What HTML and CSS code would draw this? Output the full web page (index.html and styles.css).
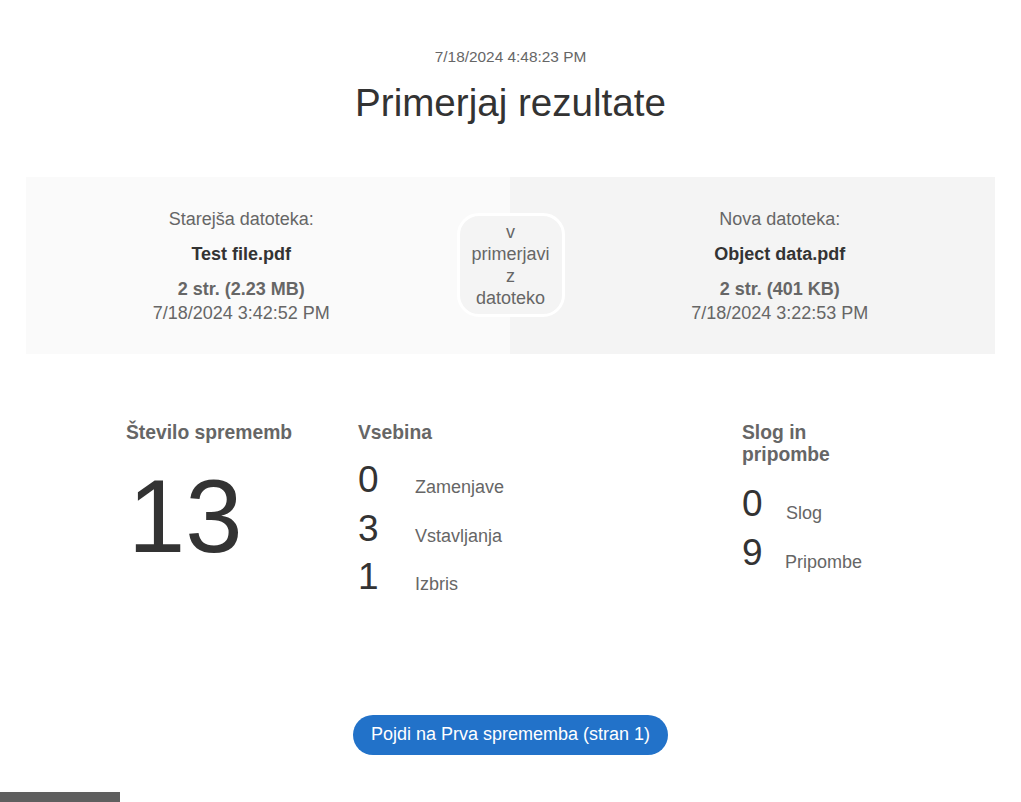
FILE: index.html
```html
<!DOCTYPE html>
<html lang="sl">
<head>
<meta charset="utf-8">
<title>Primerjaj rezultate</title>
<link rel="stylesheet" href="styles.css">
</head>
<body>
<div class="page">
  <header class="head">
    <div class="stamp">7/18/2024 4:48:23 PM</div>
    <h1 class="title">Primerjaj rezultate</h1>
  </header>

  <section class="files">
    <div class="file">
      <div class="file-label">Starejša datoteka:</div>
      <div class="file-name">Test file.pdf</div>
      <div class="file-size">2 str. (2.23 MB)</div>
      <div class="file-date">7/18/2024 3:42:52 PM</div>
    </div>
    <div class="versus">v<br>primerjavi<br>z<br>datoteko</div>
    <div class="file">
      <div class="file-label">Nova datoteka:</div>
      <div class="file-name">Object data.pdf</div>
      <div class="file-size">2 str. (401 KB)</div>
      <div class="file-date">7/18/2024 3:22:53 PM</div>
    </div>
  </section>

  <section class="stats">
    <div class="col col-total">
      <h2 class="col-title">Število sprememb</h2>
      <div class="total">13</div>
    </div>
    <div class="col col-content">
      <h2 class="col-title">Vsebina</h2>
      <div class="rows">
        <div class="row"><span class="num">0</span><span class="lbl">Zamenjave</span></div>
        <div class="row"><span class="num">3</span><span class="lbl">Vstavljanja</span></div>
        <div class="row"><span class="num">1</span><span class="lbl">Izbris</span></div>
      </div>
    </div>
    <div class="col col-style">
      <h2 class="col-title">Slog in pripombe</h2>
      <div class="rows">
        <div class="row"><span class="num">0</span><span class="lbl">Slog</span></div>
        <div class="row"><span class="num">9</span><span class="lbl">Pripombe</span></div>
      </div>
    </div>
  </section>

  <div class="actions">
    <button class="go" type="button">Pojdi na Prva sprememba (stran 1)</button>
  </div>
</div>
<div class="statusbar"></div>
</body>
</html>
```

FILE: styles.css
```css
html, body {
  margin: 0;
  padding: 0;
  background: #ffffff;
}

body {
  font-family: "Liberation Sans", Arial, sans-serif;
  color: #333333;
}

.page {
  padding: 48px 26px 0 26px;
}

.head {
  text-align: center;
}

.stamp {
  font-size: 15.4px;
  line-height: 18px;
  color: #666666;
}

.title {
  margin: 14px 0 0 0;
  font-size: 38.6px;
  line-height: 46px;
  font-weight: normal;
  color: #333333;
}

.files {
  margin-top: 51px;
  height: 177px;
  display: flex;
  align-items: center;
  background: linear-gradient(to right, #fafafa 0, #fafafa 50%, #f4f4f4 50%, #f4f4f4 100%);
}

.file {
  flex: 1;
  text-align: center;
  font-size: 18px;
  color: #666666;
}

.file-label {
  line-height: 22px;
}

.file-name {
  margin-top: 13px;
  line-height: 22px;
  font-weight: bold;
  color: #333333;
}

.file-size {
  margin-top: 13px;
  line-height: 22px;
  font-weight: bold;
  color: #666666;
}

.file-date {
  margin-top: 2px;
  line-height: 22px;
}

.versus {
  width: 108px;
  height: 104px;
  box-sizing: border-box;
  border: 3px solid #ffffff;
  border-radius: 22px;
  background: #f4f4f4;
  text-align: center;
  font-size: 18px;
  line-height: 22px;
  color: #666666;
  padding-top: 5px;
  margin-top: -2px;
}

.stats {
  display: grid;
  grid-template-columns: 232px 384px 120px;
  padding-left: 100px;
  margin-top: 68px;
}

.col-title {
  margin: 0;
  font-size: 19.3px;
  line-height: 22px;
  font-weight: bold;
  color: #666666;
}

.total {
  font-size: 103px;
  line-height: 104px;
  color: #333333;
  margin-top: 21px;
  padding-left: 2px;
}

.rows {
  margin-top: 12px;
}

.col-style .rows {
  margin-top: 14px;
}

.row {
  display: flex;
  align-items: baseline;
  height: 48.5px;
}

.num {
  width: 57px;
  font-size: 37px;
  line-height: 48px;
  color: #333333;
}

.col-style .num {
  width: 44px;
}

.lbl {
  font-size: 18px;
  color: #666666;
  position: relative;
  top: 1px;
}

.col-style .lbl {
  top: 3px;
}

.actions {
  display: flex;
  justify-content: center;
  margin-top: 113px;
}

.go {
  height: 40px;
  padding: 0 18px;
  border: none;
  border-radius: 20px;
  background: #2272c9;
  color: #ffffff;
  font-family: "Liberation Sans", Arial, sans-serif;
  font-size: 18px;
  cursor: pointer;
}

.statusbar {
  position: fixed;
  left: 0;
  bottom: 0;
  width: 120px;
  height: 10px;
  background: #5f5f5f;
}
```
